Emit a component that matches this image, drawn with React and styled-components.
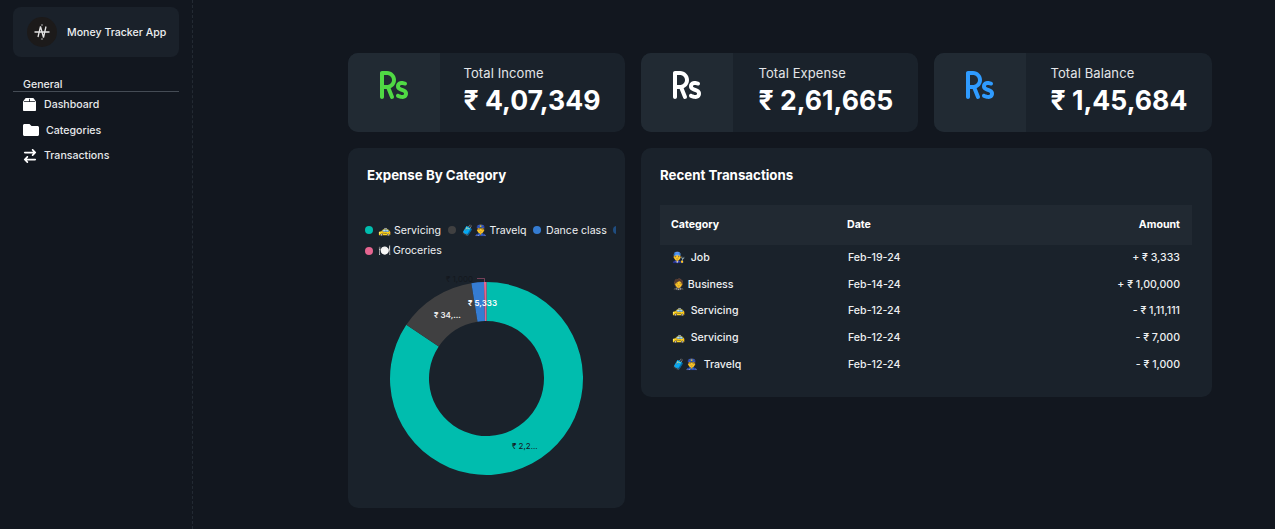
import React from "react";
import styled, { createGlobalStyle } from "styled-components";
import { FaFolder } from "react-icons/fa";
import { FaRupeeSign, FaArrowRightArrowLeft } from "react-icons/fa6";
import { BsBox2Fill } from "react-icons/bs";

const Global = createGlobalStyle`
  html, body { margin: 0; padding: 0; background: #12171f; }
  body { font-family: Inter, "Noto Sans", sans-serif; color: #fff; overflow: hidden; }
`;
const Page = styled.div`display: flex; width: 1275px; height: 529px; background: #12171f;`;
const Sidebar = styled.aside`
  width: 166px; padding: 7px 13px 0; border-right: 1px dashed #232a33; flex: none;
`;
const Brand = styled.div`
  display: flex; align-items: center; gap: 10px; height: 50px; padding-left: 14px;
  box-sizing: border-box; background: #1a212a; border-radius: 8px;
`;
const Logo = styled.div`
  width: 30px; height: 30px; border-radius: 50%; background: #1c1a1a;
  display: flex; align-items: center; justify-content: center; flex: none;
`;
const BrandName = styled.span`font-size: 10.6px; font-weight: 500; color: #eceef0;`;
const SectionTitle = styled.div`
  margin-top: 21px; padding: 0 0 0 10px; height: 13px; line-height: 13px; font-size: 10.6px;
  font-weight: 500; color: #e8eaec; border-bottom: 1px solid #454c55;
`;
const NavItem = styled.div`
  display: flex; align-items: center; height: 25.5px; padding-left: 10px; font-size: 10.6px;
  font-weight: 500; color: #e6e8ea; gap: ${p => p.$gap}px;
  svg { flex: none; color: #fff; }
`;
const Nav = styled.nav`margin-top: 0;`;
const Main = styled.main`
  flex: 1; padding: 53px 63px 0 155px; display: grid; grid-template-columns: 277px 571px;
  grid-template-rows: 79px auto; gap: 16px; align-content: start;
`;
const Stats = styled.div`
  grid-column: 1 / -1; display: grid; grid-template-columns: 277px 277px 278px; gap: 16px;
`;
const Stat = styled.div`display: flex; background: #1a222b; border-radius: 10px; overflow: hidden;`;
const StatIcon = styled.div`
  width: 92px; height: 79px; flex: none; background: #212a33; display: flex; justify-content: center;
  padding-top: 16px; box-sizing: border-box; color: ${p => p.$color};
`;
const StatBody = styled.div`padding: 12px 0 0 ${p => p.$pad}px;`;
const StatLabel = styled.div`font-size: 13px; line-height: 17px; color: #e3e5e8; letter-spacing: .1px;`;
const StatValue = styled.div`font-size: 26.6px; line-height: 37px; font-weight: 700; color: #fff; white-space: nowrap;`;
const Panel = styled.section`
  background: #1a222b; border-radius: 10px; padding: 19px; box-sizing: border-box;
  height: ${p => p.$h}px; overflow: hidden;
`;
const PanelTitle = styled.h2`margin: 0; font-size: 13.3px; line-height: 17px; font-weight: 700; color: #fff;`;
const Legend = styled.div`margin: 36px 0 0 -2px; width: 251px; overflow: hidden;`;
const LegendRow = styled.div`display: flex; align-items: center; height: 20.5px; gap: 6.5px; white-space: nowrap;`;
const LegendItem = styled.span`display: inline-flex; align-items: center; gap: 5px; font-size: 10.6px; color: #eef0f2; flex: none;`;
const Dot = styled.i`width: 8px; height: 8px; border-radius: 50%; background: ${p => p.$c}; flex: none;`;
const Chart = styled.svg`display: block; margin: 0 0 0 -19px; width: 277px; height: 216px;`;
const ChartLabel = styled.text`
  font-family: Inter, sans-serif; font-size: 8px; font-weight: ${p => p.$w || 400}; fill: ${p => p.$c};
`;
const Table = styled.table`
  width: 532px; margin-top: 21px; border-collapse: collapse; font-size: 10.6px; color: #eef0f2; table-layout: fixed;
`;
const Th = styled.th`
  box-sizing: border-box; height: 40px; padding: 0 12px 2px 11px; background: #212932; font-weight: 700; color: #fff;
  text-align: ${p => p.$r ? "right" : "left"}; width: ${p => p.$w || "auto"};
`;
const Td = styled.td`
  height: 26.7px; padding: 0 12px; font-weight: 500; line-height: 26px; vertical-align: top;
  white-space: pre; text-align: ${p => p.$r ? "right" : "left"};
`;

const stats = [
  ["Total Income", "₹ 4,07,349", "#50d944", 23.5],
  ["Total Expense", "₹ 2,61,665", "#ffffff", 25.5],
  ["Total Balance", "₹ 1,45,684", "#2f9bff", 24.5],
];
const rows = [
  ["👨‍🔧  Job", "Feb-19-24", "+ ₹ 3,333"],
  ["🤵 Business", "Feb-14-24", "+ ₹ 1,00,000"],
  ["🚕  Servicing", "Feb-12-24", "- ₹ 1,11,111"],
  ["🚕  Servicing", "Feb-12-24", "- ₹ 7,000"],
  ["🧳👮‍♂️  Travelq", "Feb-12-24", "- ₹ 1,000"],
];
const CX = 138.5, CY = 117.5, RO = 96.5, RI = 57.5;
const pt = (r, d) => {
  const a = (d - 90) * Math.PI / 180;
  return `${(CX + r * Math.cos(a)).toFixed(2)} ${(CY + r * Math.sin(a)).toFixed(2)}`;
};
const slice = (a, b) => {
  const l = b - a > 180 ? 1 : 0;
  return `M${pt(RO, a)}A${RO} ${RO} 0 ${l} 1 ${pt(RO, b)}L${pt(RI, b)}A${RI} ${RI} 0 ${l} 0 ${pt(RI, a)}Z`;
};
const slices = [[0, 303.8, "#00bdae"], [303.8, 351, "#404041"], [351, 358.5, "#357cd2"], [358.5, 360, "#e56590"]];

export default function App() {
  return (
    <Page>
      <Global />
      <Sidebar>
        <Brand>
          <Logo>
            <svg width="18" height="18" viewBox="0 0 18 18" fill="none" stroke="#e4e4e4" strokeWidth="1.3">
              <path d="M5 14L7.500 3.500l3 11L13 3.500M1.500 9h15" />
              <circle cx="9" cy="2" r=".7" fill="#e4e4e4" stroke="none" />
              <circle cx="9" cy="16" r=".7" fill="#e4e4e4" stroke="none" />
            </svg>
          </Logo>
          <BrandName>Money Tracker App</BrandName>
        </Brand>
        <SectionTitle>General</SectionTitle>
        <Nav>
          <NavItem $gap={8}><BsBox2Fill size={13} />Dashboard</NavItem>
          <NavItem $gap={7}><FaFolder size={16} />Categories</NavItem>
          <NavItem $gap={7}><FaArrowRightArrowLeft size={14} />Transactions</NavItem>
        </Nav>
      </Sidebar>
      <Main>
        <Stats>
          {stats.map(([l, v, c, p]) => (
            <Stat key={l}>
              <StatIcon $color={c}><FaRupeeSign size={32} /></StatIcon>
              <StatBody $pad={p}><StatLabel>{l}</StatLabel><StatValue>{v}</StatValue></StatBody>
            </Stat>
          ))}
        </Stats>
        <Panel $h={360}>
          <PanelTitle>Expense By Category</PanelTitle>
          <Legend>
            <LegendRow>
              <LegendItem><Dot $c="#00bdae" />🚕 Servicing</LegendItem>
              <LegendItem><Dot $c="#404041" />🧳👮‍♂️ Travelq</LegendItem>
              <LegendItem><Dot $c="#357cd2" />Dance class</LegendItem>
              <LegendItem><Dot $c="#1f4d80" /></LegendItem>
            </LegendRow>
            <LegendRow>
              <LegendItem><Dot $c="#e56590" />🍽️{"\u2009"}Groceries</LegendItem>
            </LegendRow>
          </Legend>
          <Chart viewBox="0 0 277 216">
            {slices.map(([a, b, c]) => <path key={c} d={slice(a, b)} fill={c} />)}
            <path d="M129 17.500h7.500v4" fill="none" stroke="#e56590" strokeWidth="1" opacity=".45" />
            <ChartLabel x="98" y="21" $c="#14181e">₹ 1,000</ChartLabel>
            <ChartLabel x="120" y="45" $w={600} $c="#fff">₹ 5,333</ChartLabel>
            <ChartLabel x="86" y="57" $w={600} $c="#eee">₹ 34,...</ChartLabel>
            <ChartLabel x="164" y="188" $c="#14181e">₹ 2,2...</ChartLabel>
          </Chart>
        </Panel>
        <Panel $h={249}>
          <PanelTitle>Recent Transactions</PanelTitle>
          <Table>
            <thead><tr><Th $w="176px">Category</Th><Th $w="170px">Date</Th><Th $r>Amount</Th></tr></thead>
            <tbody>
              {rows.map((r, i) => (
                <tr key={i}>
                  <Td>{r[0]}</Td><Td>{r[1]}</Td><Td $r>{r[2]}</Td>
                </tr>
              ))}
            </tbody>
          </Table>
        </Panel>
      </Main>
    </Page>
  );
}
